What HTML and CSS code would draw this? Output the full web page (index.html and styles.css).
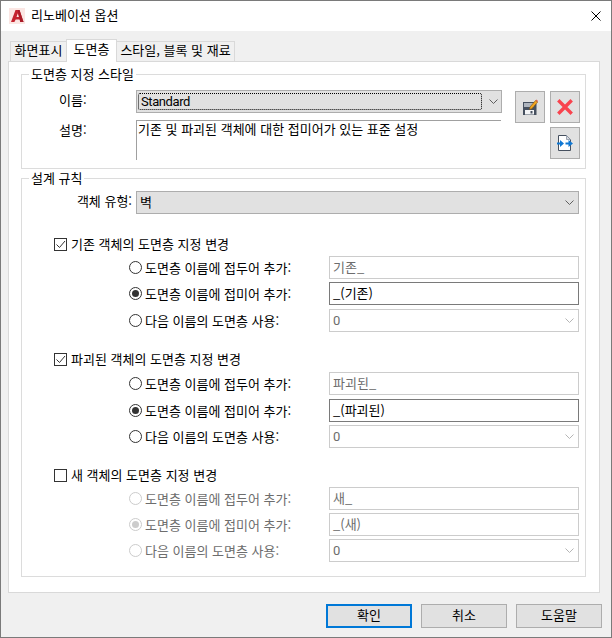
FILE: index.html
```html
<!DOCTYPE html>
<html lang="ko">
<head>
<meta charset="utf-8">
<title>리노베이션 옵션</title>
<link rel="stylesheet" href="styles.css">
</head>
<body>
<div class="window">
  <header class="titlebar">
    <svg class="app-icon" width="16" height="16" viewBox="0 0 16 16"><rect width="16" height="16" fill="#fbe6e3"/><path d="M2 14 6.500 2h4L14.500 14h-3.200l-.7-2.400H6.700L5.400 14z" fill="#c5222e"/><path d="M7.500 9h2.400L8.800 5.200z" fill="#fbe6e3"/><path d="M8.800 2h1.700l4 12h-3.200z" fill="#a81c28"/></svg>
    <span class="title">리노베이션 옵션</span>
    <svg class="close" width="10" height="10" viewBox="0 0 10 10"><path d="M.5.500l9 9M9.500.500l-9 9" stroke="#000" stroke-width="1" fill="none"/></svg>
  </header>
  <main class="body">
    <nav class="tabs">
      <div class="tab tab-one">화면표시</div>
      <div class="tab tab-active">도면층</div>
      <div class="tab tab-three">스타일, 블록 및 재료</div>
    </nav>
    <div class="panel">
      <fieldset class="group group-style">
        <legend>도면층 지정 스타일</legend>
        <div class="style-row">
          <div class="style-form">
            <div class="field-label">이름:</div>
            <div class="combo"><span class="focus-box">Standard</span><svg class="chev" width="9" height="5" viewBox="0 0 9 5"><path d="M.5.500l4 4 4-4" stroke="#5f5f5f" fill="none"/></svg></div>
            <div class="field-label">설명:</div>
            <div class="desc">기존 및 파괴된 객체에 대한 접미어가 있는 표준 설정</div>
          </div>
          <div class="tool-grid">
            <div class="tool">
              <svg width="16" height="16" viewBox="0 0 16 16">
                <path d="M1 3h11l2.500 2.500V16.500H1z" fill="#46505f"/>
                <rect x="2" y="4" width="10" height="4" fill="#aeb4bd"/>
                <rect x="3" y="11" width="9" height="4.500" fill="#f4f5f7"/>
                <rect x="8.500" y="12" width="2" height="2.500" fill="#46505f"/>
                <path d="M8 8 13.500 1.500l2 1.800L9.800 9.800 7.600 10.400z" fill="#f2a51e" stroke="#7d5212" stroke-width=".6"/>
                <path d="M13.500 1.500 14.500.5 16 2 15.500 3.300z" fill="#d9674a"/>
              </svg>
            </div>
            <div class="tool">
              <svg width="16" height="16" viewBox="0 0 16 16"><path d="M2.500 2.500l11 11M13.500 2.500l-11 11" stroke="#f8434e" stroke-width="3.400" stroke-linecap="square" fill="none"/></svg>
            </div>
            <div class="tool tool-export">
              <svg width="16" height="16" viewBox="0 0 16 16">
                <path d="M1.500.5h8l4 4v11h-12z" fill="#fff" stroke="#46505f"/>
                <path d="M9.500.5v4h4z" fill="#d5d9df" stroke="#8a94a3" stroke-width=".8"/>
                <path d="M0 7.500h3V5l4 3.500-4 3.500v-2.500H0z" fill="#0f78d4"/>
                <path d="M8.500 7.500h3V5l4.500 3.500-4.500 3.500v-2.500h-3z" fill="#0f78d4"/>
              </svg>
            </div>
          </div>
        </div>
      </fieldset>

      <fieldset class="group group-rules">
        <legend>설계 규칙</legend>
        <div class="type-row">
          <div class="type-label">객체 유형:</div>
          <div class="combo combo-wide"><span class="combo-text">벽</span><svg class="chev" width="9" height="5" viewBox="0 0 9 5"><path d="M.5.500l4 4 4-4" stroke="#5f5f5f" fill="none"/></svg></div>
        </div>

        <section class="rule">
          <div class="rule-head">
            <span class="check"><svg width="11" height="11" viewBox="0 0 11 11"><path d="M1.500 5.500l3 3 5.500-6.500" stroke="#333" stroke-width="1" fill="none"/></svg></span>
            <span class="head-text">기존 객체의 도면층 지정 변경</span>
          </div>
          <div class="opt"><span class="radio"></span><span class="opt-label">도면층 이름에 접두어 추가:</span><div class="box box-off">기존_</div></div>
          <div class="opt"><span class="radio radio-on"></span><span class="opt-label">도면층 이름에 접미어 추가:</span><div class="box box-on">_(기존)</div></div>
          <div class="opt opt-nudge"><span class="radio"></span><span class="opt-label">다음 이름의 도면층 사용:</span><div class="box box-off box-drop"><span class="latin">0</span><svg width="9" height="5" viewBox="0 0 9 5"><path d="M.5.500l4 4 4-4" stroke="#b5b5b5" fill="none"/></svg></div></div>
        </section>

        <section class="rule">
          <div class="rule-head rule-head-tall">
            <span class="check"><svg width="11" height="11" viewBox="0 0 11 11"><path d="M1.500 5.500l3 3 5.500-6.500" stroke="#333" stroke-width="1" fill="none"/></svg></span>
            <span class="head-text">파괴된 객체의 도면층 지정 변경</span>
          </div>
          <div class="opt"><span class="radio"></span><span class="opt-label">도면층 이름에 접두어 추가:</span><div class="box box-off">파괴된_</div></div>
          <div class="opt opt-nudge"><span class="radio radio-on"></span><span class="opt-label">도면층 이름에 접미어 추가:</span><div class="box box-on">_(파괴된)</div></div>
          <div class="opt"><span class="radio"></span><span class="opt-label">다음 이름의 도면층 사용:</span><div class="box box-off box-drop"><span class="latin">0</span><svg width="9" height="5" viewBox="0 0 9 5"><path d="M.5.500l4 4 4-4" stroke="#b5b5b5" fill="none"/></svg></div></div>
        </section>

        <section class="rule rule-disabled">
          <div class="rule-head">
            <span class="check"></span>
            <span class="head-text">새 객체의 도면층 지정 변경</span>
          </div>
          <div class="opt"><span class="radio"></span><span class="opt-label">도면층 이름에 접두어 추가:</span><div class="box box-off">새_</div></div>
          <div class="opt"><span class="radio radio-on"></span><span class="opt-label">도면층 이름에 접미어 추가:</span><div class="box box-off">_(새)</div></div>
          <div class="opt"><span class="radio"></span><span class="opt-label">다음 이름의 도면층 사용:</span><div class="box box-off box-drop"><span class="latin">0</span><svg width="9" height="5" viewBox="0 0 9 5"><path d="M.5.500l4 4 4-4" stroke="#b5b5b5" fill="none"/></svg></div></div>
        </section>
      </fieldset>
    </div>
    <footer class="actions">
      <div class="btn btn-default">확인</div>
      <div class="btn">취소</div>
      <div class="btn">도움말</div>
    </footer>
  </main>
</div>
</body>
</html>
```
FILE: styles.css
```css
* { box-sizing: border-box; }
html, body { margin: 0; padding: 0; }
body {
  font-family: "Noto Sans CJK KR", "Noto Sans", sans-serif;
  font-size: 13px;
  line-height: 18px;
  color: #000;
}
.window {
  width: 612px;
  height: 638px;
  border: 1px solid #7a7a7a;
  display: flex;
  flex-direction: column;
  background: #f0f0f0;
}
.titlebar {
  height: 30px;
  background: #fff;
  display: flex;
  align-items: center;
  padding: 0 10px 0 8px;
  flex: none;
}
.app-icon { margin-right: 6px; }
.title { flex: 1; padding-bottom: 2px; }
.body { flex: 1; padding: 8px 8px 0 7px; display: flex; flex-direction: column; }
.tabs { display: flex; align-items: flex-end; height: 22px; padding-left: 2px; flex: none; }
.tab {
  height: 20px;
  border: 1px solid #d9d9d9;
  border-bottom: 0;
  display: flex;
  align-items: center;
  justify-content: center;
  white-space: nowrap;
  padding-bottom: 3px;
}
.tab-one { width: 56px; border-right: 0; }
.tab-three { width: 118px; border-left: 0; }
.tab-active {
  width: 51px;
  height: 23px;
  margin-bottom: -1px;
  background: #fff;
  position: relative;
  z-index: 1;
  padding-bottom: 5px;
}
.panel {
  width: 592px;
  height: 532px;
  flex: none;
  background: #fff;
  border: 1px solid #d9d9d9;
  padding: 3px 13px 0 12px;
}
.group {
  margin: 0;
  padding: 0;
  border: 1px solid #dcdcdc;
  min-width: 0;
}
.group legend { margin-left: 7px; padding: 0 2px; line-height: 18px; }
.group-style { height: 104px; }
.group-rules { height: 408px; }

.style-row { display: flex; padding-top: 7px; }
.style-form {
  width: 480px;
  display: grid;
  grid-template-columns: 114px 366px;
  grid-auto-rows: min-content;
  row-gap: 7px;
}
.field-label { padding-left: 37px; line-height: 20px; }
.combo {
  height: 23px;
  border: 1px solid #adadad;
  background: #e1e1e1;
  display: flex;
  align-items: center;
  justify-content: space-between;
  padding: 0 3px 0 0;
}
.focus-box {
  width: 344px;
  height: 17px;
  border: 1px dotted #000;
  border-radius: 2px;
  font-family: Roboto, sans-serif;
  letter-spacing: -0.4px;
  line-height: 16px;
  padding-left: 2px;
  margin-left: 1px;
}
.combo-text { padding: 0 0 2px 3px; }
.chev { flex: none; }
.desc {
  height: 40px;
  border-top: 1px solid #a0a0a0;
  border-left: 1px solid #a0a0a0;
  padding-left: 1px;
  width: 365px;
  white-space: nowrap;
  line-height: 16px;
}
.tool-grid {
  margin: 1px 0 0 13px;
  display: grid;
  grid-template-columns: 30px 30px;
  grid-auto-rows: 32px;
  column-gap: 5px;
  row-gap: 4px;
}
.tool {
  border: 1px solid #adadad;
  background: #e1e1e1;
  display: flex;
  align-items: center;
  justify-content: center;
}
.tool-export { grid-column: 2; }

.type-row { display: flex; padding-top: 4px; }
.type-label { width: 110px; text-align: right; line-height: 19px; margin-right: 4px; }
.combo-wide { width: 443px; padding-right: 4px; }

.rule { padding-left: 32px; margin-top: 20px; }
.type-row + .rule { margin-top: 23px; }
.rule-head { display: flex; align-items: center; height: 15px; margin-bottom: 4px; }
.rule-head-tall { margin-bottom: 5px; }
.head-text { padding-bottom: 2px; }
.check {
  width: 13px;
  height: 13px;
  border: 1px solid #333;
  background: #fff;
  margin-right: 4px;
  display: flex;
  align-items: center;
  justify-content: center;
  flex: none;
}
.opt { display: flex; align-items: center; height: 23px; margin-top: 3px; padding-left: 75px; }
.rule-head + .opt { margin-top: 0; }
.opt-nudge { margin-top: 4px; }
.radio {
  width: 13px;
  height: 13px;
  border: 1px solid #333;
  border-radius: 50%;
  background: #fff;
  margin-right: 3px;
  flex: none;
  position: relative;
}
.radio-on::after {
  content: "";
  position: absolute;
  left: 2px;
  top: 2px;
  width: 7px;
  height: 7px;
  border-radius: 50%;
  background: #333;
}
.opt-label { width: 184px; flex: none; white-space: nowrap; }
.box {
  width: 250px;
  height: 23px;
  border: 1px solid #7a7a7a;
  padding-left: 3px;
  line-height: 20px;
  background: #fff;
  flex: none;
}
.box-off { border-color: #cccccc; color: #6d6d6d; }
.box-drop { display: flex; align-items: center; justify-content: space-between; padding-right: 4px; }
.latin { font-family: Roboto, sans-serif; }
.rule-disabled .opt-label { color: #6d6d6d; }
.rule-disabled .radio { border-color: #cccccc; }
.rule-disabled .radio-on::after { background: #cccccc; }
.actions {
  display: flex;
  justify-content: flex-end;
  gap: 9px;
  margin-top: 11px;
  padding-right: 1px;
}
.btn {
  width: 86px;
  height: 24px;
  border: 1px solid #adadad;
  background: #e1e1e1;
  display: flex;
  align-items: center;
  justify-content: center;
  padding-bottom: 2px;
}
.btn-default { border: 2px solid #0078d7; }
```
